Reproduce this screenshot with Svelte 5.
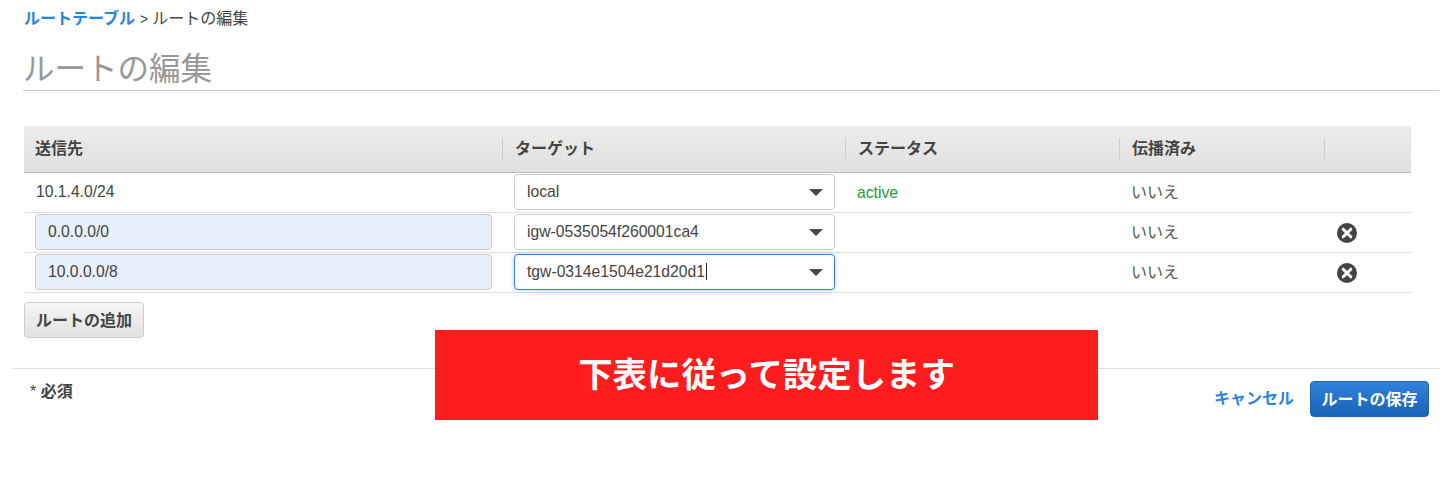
<script>
  const rows = [
    { dest: '10.1.4.0/24', target: 'local', status: 'active', editable: false },
    { dest: '0.0.0.0/0', target: 'igw-0535054f260001ca4', status: '', editable: true },
    { dest: '10.0.0.0/8', target: 'tgw-0314e1504e21d20d1', status: '', editable: true, focus: true }
  ];
  const heads = ['送信先', 'ターゲット', 'ステータス', '伝播済み', ''];
</script>

<div class="page">
  <div class="crumb"><a href="#t">ルートテーブル</a><span class="sep">&gt;</span>ルートの編集</div>
  <h1>ルートの編集</h1>

  <div class="table">
    <div class="row head">
      {#each heads as h}
        <div class="th"><span class="th-in">{h}</span></div>
      {/each}
    </div>
    {#each rows as r}
      <div class="row">
        <div class="cell dest">
          {#if r.editable}
            <div class="field">{r.dest}</div>
          {:else}
            <span class="plain">{r.dest}</span>
          {/if}
        </div>
        <div class="cell tgt">
          <div class="select" class:focus={r.focus}>
            <span class="val">{r.target}{#if r.focus}<i class="caret"></i>{/if}</span>
            <svg width="14" height="7" viewBox="0 0 14 7"><path d="M0 0H14L7 7Z" fill="#444"/></svg>
          </div>
        </div>
        <div class="cell status">{r.status}</div>
        <div class="cell prop"><span>いいえ</span></div>
        <div class="cell act">
          {#if r.editable}
            <svg width="20" height="20" viewBox="0 0 20 20">
              <circle cx="10" cy="10" r="10" fill="#444"/>
              <path d="M6.2 6.2L13.8 13.8M13.8 6.2L6.2 13.8" stroke="#fff" stroke-width="3" stroke-linecap="round"/>
            </svg>
          {/if}
        </div>
      </div>
    {/each}
  </div>

  <div class="add-wrap"><button class="btn"><span class="lbl">ルートの追加</span></button></div>

  <div class="footer">
    <div class="req"><span class="ast">*</span> 必須</div>
    <div class="actions">
      <a class="cancel" href="#c">キャンセル</a>
      <button class="btn primary"><span class="lbl">ルートの保存</span></button>
    </div>
  </div>

  <div class="banner">下表に従って設定します</div>
</div>

<style>
  :global(body) {
    margin: 0;
    background: #fff;
  }
  .page {
    position: relative;
    height: 478px;
    width: 1452px;
    overflow: hidden;
    box-sizing: border-box;
    font-family: "Liberation Sans", "Noto Sans CJK JP", sans-serif;
    color: #444;
    font-size: 16px;
  }
  .crumb {
    padding: 7px 0 0 24px;
    height: 23px;
    line-height: 23px;
    color: #444;
    font-size: 16px;
  }
  .crumb a {
    color: #2a84e0;
    font-weight: 700;
    text-decoration: none;
  }
  .sep {
    padding: 0 4px 0 5px;
    font-size: 14px;
  }
  h1 {
    margin: 14px 13px 0 23px;
    height: 46px;
    line-height: 50px;
    font-size: 31.5px;
    font-weight: 400;
    color: #999;
    border-bottom: 1px solid #ccc;
  }
  .table {
    margin: 35px 0 0 24px;
    width: 1387px;
  }
  .row {
    display: grid;
    grid-template-columns: 479px 343px 274px 205px 86px;
    height: 40px;
    border-bottom: 1px solid #ddd;
    box-sizing: border-box;
  }
  .head {
    height: 47px;
    background: linear-gradient(#ececec, #e0e0e0);
    border-bottom: 1px solid #bbb;
    font-weight: 700;
  }
  .th {
    display: flex;
    align-items: center;
    height: 21px;
    margin-top: 12px;
    border-right: 1px solid #ccc;
    box-sizing: border-box;
  }
  .th:last-child { border-right: 0; }
  .th-in { padding: 0 0 3px 11px; }
  .th:not(:first-child) .th-in { padding-left: 12px; }
  .cell {
    display: flex;
    align-items: center;
    font-size: 15.7px;
    min-width: 0;
  }
  .dest { padding: 1px 11px 2px; }
  .plain { margin: -1px 0 0 1px; }
  .field {
    flex: 1;
    height: 36px;
    box-sizing: border-box;
    background: #e8f0fc;
    border: 1px solid #ccc;
    border-radius: 4px;
    padding-left: 12px;
    line-height: 34px;
  }
  .tgt { padding: 1px 11px 2px; }
  .select {
    flex: 1;
    height: 36px;
    box-sizing: border-box;
    border: 1px solid #ccc;
    border-radius: 4px;
    padding: 0 11px 0 12px;
    display: flex;
    align-items: center;
    justify-content: space-between;
    background: #fff;
  }
  .val { margin-top: -1px; }
  .select.focus {
    border-color: #2a84e0;
    box-shadow: 0 0 4px rgba(42,132,224,.4);
  }
  .caret {
    display: inline-block;
    width: 1px;
    height: 17px;
    background: #222;
    margin-left: 1px;
    vertical-align: -3px;
  }
  .status {
    padding-left: 11px;
    color: #1d9a3c;
  }
  .prop {
    padding-left: 11px;
    color: #555;
    font-size: 16px;
  }
  .prop span { margin-top: -3px; }
  .act { padding: 1px 0 0 12px; }
  .add-wrap {
    padding: 9px 0 0 24px;
  }
  .btn {
    height: 36px;
    padding: 0 11px;
    font: 700 16px "Liberation Sans", "Noto Sans CJK JP", sans-serif;
    color: #444;
    background: linear-gradient(#f5f5f5, #e2e2e2);
    border: 1px solid #ccc;
    border-radius: 4px;
  }
  .lbl {
    display: block;
    margin-top: -3px;
  }
  .footer {
    margin: 30px 13px 0;
    border-top: 1px solid #ddd;
    display: flex;
    justify-content: space-between;
    align-items: flex-start;
    padding: 12px 10px 0 17px;
  }
  .req {
    font-weight: 700;
    font-size: 16px;
    line-height: 22px;
  }
  .ast { font-weight: 400; }
  .actions {
    display: flex;
    align-items: center;
    gap: 16px;
  }
  .cancel {
    color: #2a84e0;
    font-weight: 700;
    text-decoration: none;
    margin-top: -4px;
  }
  .primary {
    width: 119px;
    padding: 0;
    color: #fff;
    background: linear-gradient(#2f83dc, #1a62b8);
    border-color: #1a62b8;
  }
  .banner {
    position: absolute;
    left: 435px;
    top: 330px;
    width: 663px;
    height: 90px;
    background: #ff1c1c;
    color: #fff;
    font-size: 34.4px;
    font-weight: 700;
    display: flex;
    align-items: center;
    justify-content: center;
    padding-bottom: 7px;
    box-sizing: border-box;
  }
</style>
